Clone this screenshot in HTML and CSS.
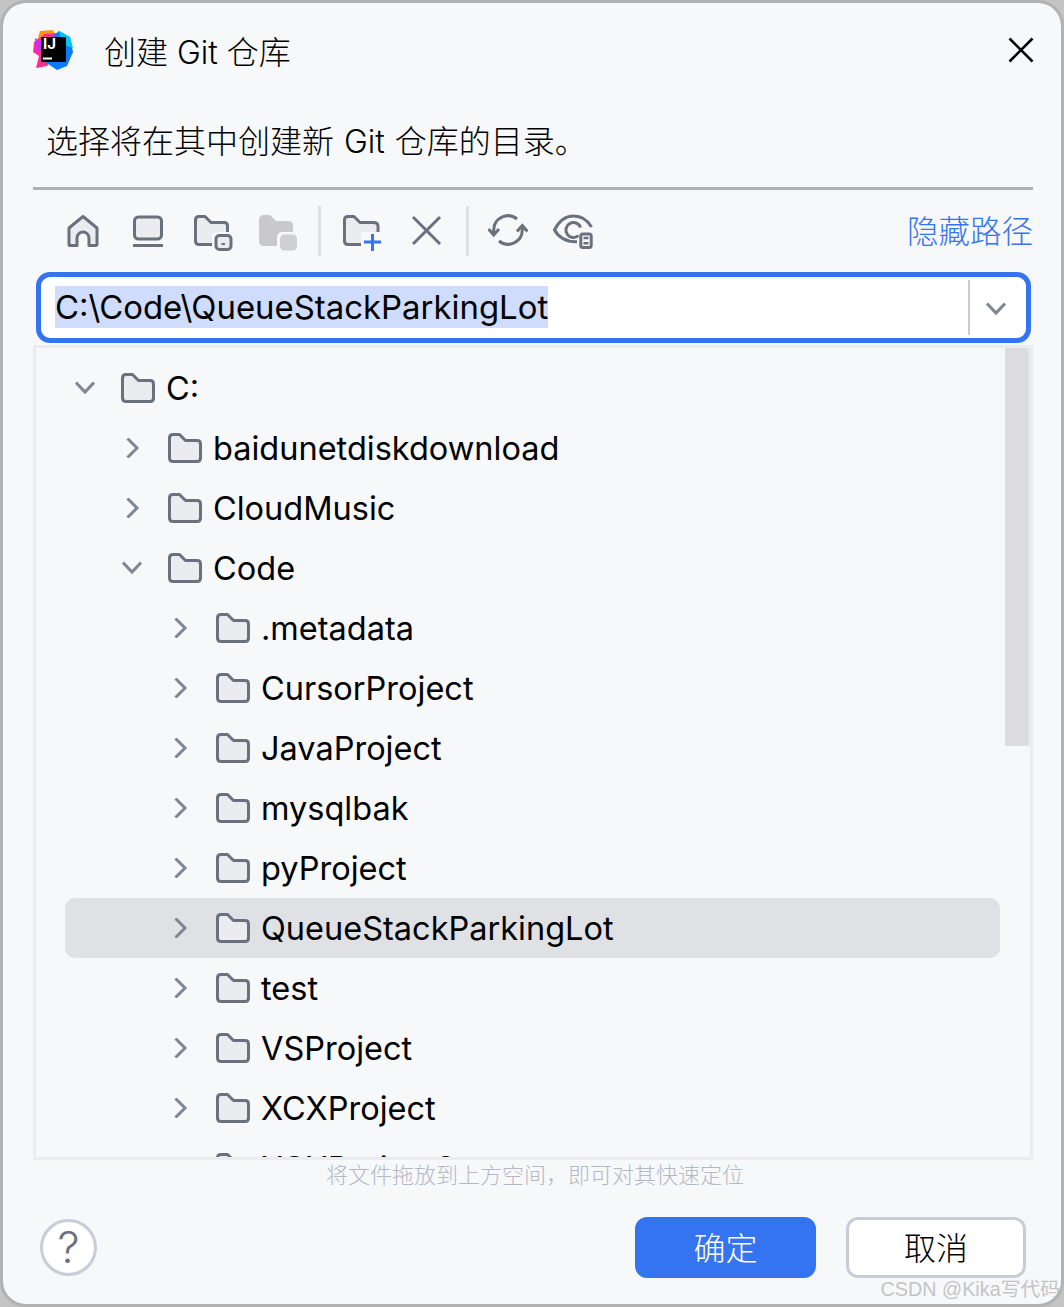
FILE: index.html
```html
<!DOCTYPE html>
<html lang="zh-CN">
<head>
    <meta charset="UTF-8">
    <meta name="viewport" content="width=device-width, initial-scale=1.0">
    <title>创建 Git 仓库</title>
    <link rel="stylesheet" href="styles.css">
</head>
<body>
    <svg class="defs" width="0" height="0">
        <symbol id="folder" viewBox="0 0 34 30">
            <path d="M1.5 5Q1.5 1.5 5 1.5H11.5L17.5 7.5H29Q32.5 7.5 32.5 11V25Q32.5 28.5 29 28.5H5Q1.5 28.5 1.5 25Z" fill="#ebecf0" stroke="#6c707e" stroke-width="3" stroke-linejoin="round"/>
        </symbol>
        <symbol id="chev-right" viewBox="0 0 20 20">
            <path d="M5.5 0.5L15 10L5.5 19.5" fill="none" stroke="#818594" stroke-width="3"/>
        </symbol>
        <symbol id="chev-down" viewBox="0 0 20 20">
            <path d="M1 4.5L10 14L19 4.5" fill="none" stroke="#818594" stroke-width="3"/>
        </symbol>
    </svg>

    <div class="dialog">
        <div class="header">
            <svg class="logo" width="40" height="40" viewBox="0 0 40 40">
                <polygon points="7,1 20,0 24,8 8,22 2,18" fill="#ff9419"/>
                <polygon points="1,12 12,4 24,3 30,14 14,36 3,38 6,26 0,22" fill="#ff2d90"/>
                <polygon points="2,8 12,14 4,24" fill="#d02cf0"/>
                <polygon points="26,1 37,7 40,22 34,36 24,40 12,32 20,6" fill="#087cfa"/>
                <polygon points="26,1 37,7 40,18 28,14" fill="#07c3f2"/>
                <rect x="8" y="7" width="25" height="25" fill="#000"/>
                <text class="logo-text" x="10" y="19">IJ</text>
                <rect x="10" y="27.5" width="9" height="2" fill="#fff"/>
            </svg>
            <span class="title">创建 Git 仓库</span>
            <svg class="close" width="26" height="26" viewBox="0 0 26 26">
                <path d="M1.5 1.5L24.5 24.5M24.5 1.5L1.5 24.5" stroke="#000" stroke-width="2.6"/>
            </svg>
        </div>

        <div class="desc">选择将在其中创建新 Git 仓库的目录。</div>
        <div class="rule"></div>

        <div class="toolbar">
            <div class="tool-group first">
                <svg width="40" height="40" viewBox="0 0 40 40">
                    <path d="M6.5 34.5Q6 34.5 6 33V17L20 5.5L34 17V33Q34 34.5 32.5 34.5H26V27A6 6 0 0 0 14 27V34.5Z" fill="#ebecf0" stroke="#6c707e" stroke-width="3" stroke-linejoin="round"/>
                </svg>
                <svg width="40" height="40" viewBox="0 0 40 40">
                    <rect x="6.5" y="6" width="27" height="22" rx="4" fill="#ebecf0" stroke="#6c707e" stroke-width="3"/>
                    <path d="M5 34.5H35" stroke="#6c707e" stroke-width="3"/>
                </svg>
                <svg width="40" height="40" viewBox="0 0 40 40">
                    <path d="M2.5 9Q2.5 5.5 6 5.5H12L18 11.5H31Q34.5 11.5 34.5 15V33.5H6Q2.5 33.5 2.5 30Z" fill="#ebecf0" stroke="#6c707e" stroke-width="3" stroke-linejoin="round"/>
                    <rect x="19" y="21" width="21" height="19" rx="5" fill="#f7f8fa"/>
                    <rect x="23" y="24.5" width="15" height="14" rx="3.5" fill="#ebecf0" stroke="#6c707e" stroke-width="3"/>
                    <path d="M28.5 33H32" stroke="#6c707e" stroke-width="2"/>
                </svg>
                <svg width="40" height="40" viewBox="0 0 40 40">
                    <path d="M1 9Q1 4 6 4H12L18 10H30Q35 10 35 15V35H6Q1 35 1 30Z" fill="#c9c9cb"/>
                    <rect x="19" y="21" width="21" height="19" rx="5" fill="#f7f8fa"/>
                    <rect x="22" y="23.5" width="17" height="16" rx="4.5" fill="#cfcfd1"/>
                </svg>
            </div>
            <div class="tool-sep"></div>
            <div class="tool-group middle">
                <svg width="40" height="40" viewBox="0 0 40 40">
                    <path d="M2.5 9Q2.5 5.5 6 5.5H12L18 11.5H31Q36 11.5 36 15V33.5H6Q2.5 33.5 2.5 30Z" fill="#ebecf0" stroke="#6c707e" stroke-width="3" stroke-linejoin="round"/>
                    <rect x="19" y="21" width="21" height="19" fill="#f7f8fa"/>
                    <path d="M22 31H39M30.5 23V40" stroke="#3574f0" stroke-width="3"/>
                </svg>
                <svg width="40" height="40" viewBox="0 0 40 40">
                    <path d="M7 6L34 33M34 6L7 33" stroke="#6c707e" stroke-width="3"/>
                </svg>
            </div>
            <div class="tool-sep"></div>
            <div class="tool-group last">
                <svg width="40" height="40" viewBox="0 0 40 40">
                    <path d="M5.7 23V19A14.3 14.3 0 0 1 29 8" fill="none" stroke="#6c707e" stroke-width="3"/>
                    <path d="M34.3 15V19A14.3 14.3 0 0 1 11 30" fill="none" stroke="#6c707e" stroke-width="3"/>
                    <path d="M0.5 18L5.7 24L11 18M29 20.5L34.3 14.5L39.5 20.5" fill="none" stroke="#6c707e" stroke-width="3"/>
                </svg>
                <svg width="40" height="40" viewBox="0 0 40 40">
                    <path d="M24 30.7C14 31 6 27 1.5 19C6 10 13 5 20.5 5C28 5 34.5 9 38.5 16" fill="none" stroke="#6c707e" stroke-width="3"/>
                    <path d="M25.5 24.5A7.5 7.5 0 1 1 27.5 16.5" fill="none" stroke="#6c707e" stroke-width="3"/>
                    <rect x="27.8" y="23" width="10.4" height="13.5" rx="2" fill="#f7f8fa" stroke="#6c707e" stroke-width="3"/>
                    <path d="M30.5 27H35.5M30.5 32.3H35.5" stroke="#6c707e" stroke-width="2.5"/>
                </svg>
            </div>
            <a class="hide-path">隐藏路径</a>
        </div>

        <div class="path-input">
            <span class="path-text"><span class="selected">C:\Code\QueueStackParkingLot</span></span>
            <div class="path-drop">
                <svg width="20" height="20"><use href="#chev-down"/></svg>
            </div>
        </div>

        <div class="tree">
            <div class="tree-list">
                <div class="row level-0"><svg class="chev" width="20" height="20"><use href="#chev-down"/></svg><svg class="ficon" width="34" height="30"><use href="#folder"/></svg><span>C:</span></div>
                <div class="row level-1"><svg class="chev" width="20" height="20"><use href="#chev-right"/></svg><svg class="ficon" width="34" height="30"><use href="#folder"/></svg><span>baidunetdiskdownload</span></div>
                <div class="row level-1"><svg class="chev" width="20" height="20"><use href="#chev-right"/></svg><svg class="ficon" width="34" height="30"><use href="#folder"/></svg><span>CloudMusic</span></div>
                <div class="row level-1"><svg class="chev" width="20" height="20"><use href="#chev-down"/></svg><svg class="ficon" width="34" height="30"><use href="#folder"/></svg><span>Code</span></div>
                <div class="row level-2"><svg class="chev" width="20" height="20"><use href="#chev-right"/></svg><svg class="ficon" width="34" height="30"><use href="#folder"/></svg><span>.metadata</span></div>
                <div class="row level-2"><svg class="chev" width="20" height="20"><use href="#chev-right"/></svg><svg class="ficon" width="34" height="30"><use href="#folder"/></svg><span>CursorProject</span></div>
                <div class="row level-2"><svg class="chev" width="20" height="20"><use href="#chev-right"/></svg><svg class="ficon" width="34" height="30"><use href="#folder"/></svg><span>JavaProject</span></div>
                <div class="row level-2"><svg class="chev" width="20" height="20"><use href="#chev-right"/></svg><svg class="ficon" width="34" height="30"><use href="#folder"/></svg><span>mysqlbak</span></div>
                <div class="row level-2"><svg class="chev" width="20" height="20"><use href="#chev-right"/></svg><svg class="ficon" width="34" height="30"><use href="#folder"/></svg><span>pyProject</span></div>
                <div class="row level-2 active"><svg class="chev" width="20" height="20"><use href="#chev-right"/></svg><svg class="ficon" width="34" height="30"><use href="#folder"/></svg><span>QueueStackParkingLot</span></div>
                <div class="row level-2"><svg class="chev" width="20" height="20"><use href="#chev-right"/></svg><svg class="ficon" width="34" height="30"><use href="#folder"/></svg><span>test</span></div>
                <div class="row level-2"><svg class="chev" width="20" height="20"><use href="#chev-right"/></svg><svg class="ficon" width="34" height="30"><use href="#folder"/></svg><span>VSProject</span></div>
                <div class="row level-2"><svg class="chev" width="20" height="20"><use href="#chev-right"/></svg><svg class="ficon" width="34" height="30"><use href="#folder"/></svg><span>XCXProject</span></div>
                <div class="row level-2"><svg class="chev" width="20" height="20"><use href="#chev-right"/></svg><svg class="ficon" width="34" height="30"><use href="#folder"/></svg><span>XCXProject2</span></div>
            </div>
            <div class="scrollbar"></div>
        </div>

        <div class="hint">将文件拖放到上方空间，即可对其快速定位</div>

        <div class="footer">
            <div class="help">?</div>
            <button class="btn btn-primary">确定</button>
            <button class="btn">取消</button>
        </div>

        <div class="watermark">CSDN @Kika写代码</div>
    </div>
</body>
</html>
```

FILE: styles.css
```css
* {
    margin: 0;
    padding: 0;
    box-sizing: border-box;
}

body {
    font-family: Inter, "Noto Sans CJK SC", sans-serif;
    background: #c4c4c4;
    color: #000;
    width: 1064px;
    height: 1307px;
    overflow: hidden;
}

.defs {
    position: absolute;
}

.dialog {
    position: relative;
    width: 1064px;
    height: 1307px;
    background: #f7f8fa;
    border: 3px solid #b2b2b2;
    border-radius: 26px;
    padding: 0 28px 0 30px;
    overflow: hidden;
}

.header {
    display: flex;
    align-items: center;
    height: 94px;
}

.logo {
    margin-right: 31px;
}

.logo-text {
    font-size: 15px;
    font-weight: 700;
    fill: #fff;
}

.title {
    font-size: 32px;
    font-weight: 300;
}

.close {
    margin-left: auto;
    margin-right: -1px;
}

.desc {
    height: 82px;
    line-height: 82px;
    margin-top: 4px;
    padding-left: 13px;
    font-size: 32px;
    font-weight: 300;
    word-spacing: 1px;
}

.rule {
    height: 3px;
    margin-top: 4px;
    background: #b0b0b0;
}

.toolbar {
    display: flex;
    align-items: center;
    gap: 20px;
    height: 82px;
    padding-left: 30px;
}

.tool-group {
    display: flex;
    gap: 25px;
}

.tool-group.middle {
    gap: 24px;
    margin-left: 1px;
}

.tool-group.last {
    margin-left: -1px;
}

.tool-sep {
    width: 3px;
    height: 50px;
    background: #dfe0e3;
}

.hide-path {
    margin-left: auto;
    margin-bottom: 4px;
    font-size: 31.5px;
    font-weight: 300;
    color: #3574f0;
}

.path-input {
    display: flex;
    align-items: center;
    height: 71px;
    margin: 0 2px 0 3px;
    padding-left: 14px;
    background: #fff;
    border: 5px solid #3574f0;
    border-radius: 14px;
}

.path-text {
    flex: 1;
    font-size: 32.9px;
    padding-bottom: 2px;
}

.selected {
    background: #cfdcfb;
    padding: 1px 0;
}

.path-drop {
    display: flex;
    align-items: center;
    justify-content: center;
    width: 58px;
    height: 55px;
    padding: 3px 4px 0 0;
    border-left: 2px solid #c9ccd6;
}

.tree {
    display: flex;
    height: 815px;
    margin-top: 2px;
    border: 3px solid #ebecf0;
}

.tree-list {
    flex: 1;
    min-width: 0;
    padding: 10px 5px 0 29px;
    overflow: hidden;
}

.row {
    display: flex;
    align-items: center;
    height: 60px;
    border-radius: 10px;
    font-size: 32.5px;
    white-space: nowrap;
}

.row.active {
    background: #dfe1e5;
}

.level-0 { padding-left: 10px; }
.level-1 { padding-left: 57px; }
.level-2 { padding-left: 105px; }

.chev {
    flex: none;
    margin-right: 26px;
}

.ficon {
    flex: none;
    margin-right: 11px;
}

.scrollbar {
    width: 25px;
    height: 398px;
    flex: none;
    background: #dcdcde;
    border-right: 2px solid #e6e6e8;
}

.hint {
    height: 30px;
    line-height: 30px;
    margin-left: 4px;
    text-align: center;
    font-size: 22px;
    font-weight: 300;
    color: #b4b8c5;
}

.footer {
    display: flex;
    align-items: center;
    gap: 30px;
    margin-top: 27px;
    padding: 0 7px;
}

.help {
    width: 57px;
    height: 57px;
    margin-right: auto;
    border: 3px solid #c9ccd6;
    border-radius: 50%;
    background: #fff;
    text-align: center;
    line-height: 50px;
    font-size: 44px;
    font-weight: 300;
    color: #6c707e;
}

.btn {
    width: 180px;
    height: 61px;
    padding-bottom: 3px;
    font-family: inherit;
    font-size: 32px;
    font-weight: 300;
    background: #fff;
    border: 3px solid #c9ccd6;
    border-radius: 12px;
}

.btn-primary {
    width: 181px;
    background: #3574f0;
    border-color: #3574f0;
    color: #fff;
}

.watermark {
    position: absolute;
    right: 1px;
    bottom: 2px;
    font-family: "Liberation Sans", "Noto Sans CJK SC", sans-serif;
    font-size: 19.8px;
    color: #c4c4c4;
    white-space: nowrap;
}
```
